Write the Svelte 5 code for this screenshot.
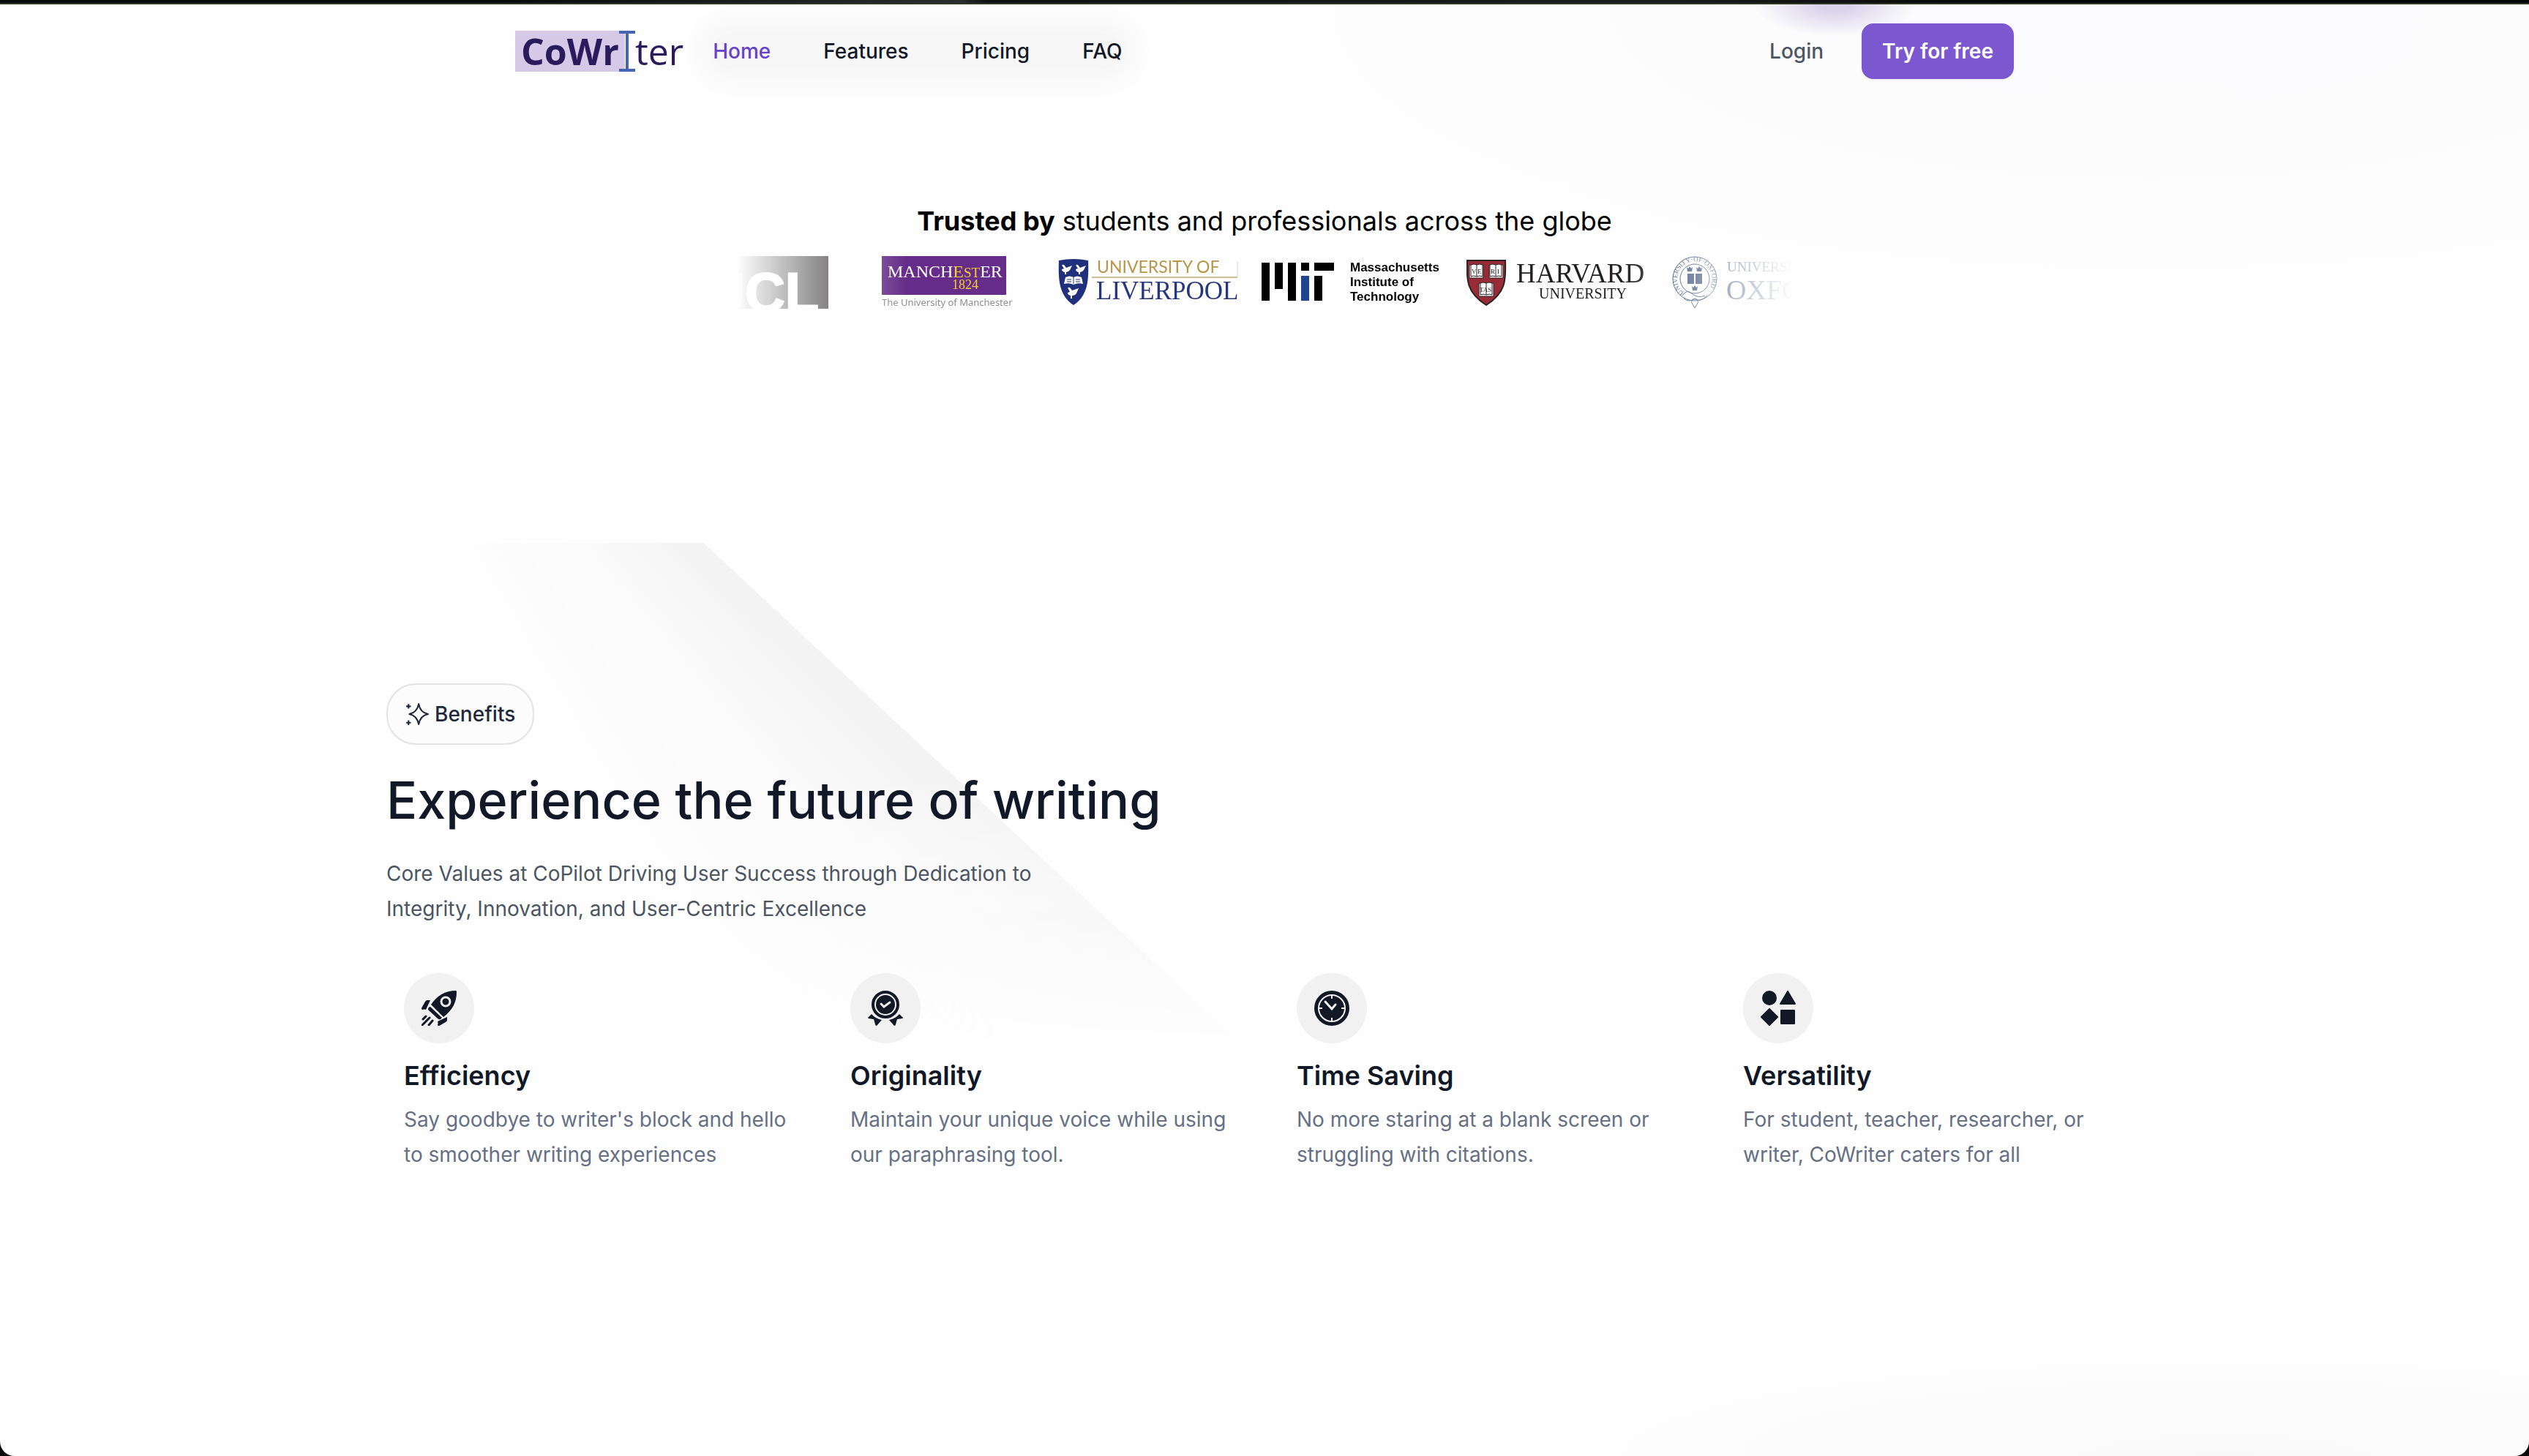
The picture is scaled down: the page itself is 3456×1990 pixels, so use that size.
<!-- src/App.svelte -->
<script lang="ts">
    type NavLink = { label: string; href: string; active?: boolean };
    type Benefit = { icon: string; title: string; text: string };

    const links: NavLink[] = [
        { label: 'Home', href: '#home', active: true },
        { label: 'Features', href: '#features' },
        { label: 'Pricing', href: '#pricing' },
        { label: 'FAQ', href: '#faq' },
    ];

    const benefits: Benefit[] = [
        {
            icon: 'rocket',
            title: 'Efficiency',
            text: "Say goodbye to writer's block and hello to smoother writing experiences",
        },
        {
            icon: 'medal',
            title: 'Originality',
            text: 'Maintain your unique voice while using our paraphrasing tool.',
        },
        {
            icon: 'clock',
            title: 'Time Saving',
            text: 'No more staring at a blank screen or struggling with citations.',
        },
        {
            icon: 'shapes',
            title: 'Versatility',
            text: 'For student, teacher, researcher, or writer, CoWriter caters for all',
        },
    ];
</script>

<div class="page">
    <header class="header">
        <div class="bar">
            <a class="logo" href="#home" aria-label="CoWriter">
                <span class="logo-mark">CoWr</span>
                <svg class="logo-cursor" viewBox="0 0 22 56" aria-hidden="true">
                    <path d="M0 2h22M0 54h22M11 2v52" fill="none" stroke="#4466b3" stroke-width="4" />
                </svg>
                <span class="logo-rest">ter</span>
            </a>
            <nav class="nav">
                {#each links as link}
                    <a href={link.href} class:active={link.active}>{link.label}</a>
                {/each}
            </nav>
            <div class="account">
                <a class="login" href="#login">Login</a>
                <button class="cta" type="button">Try for free</button>
            </div>
        </div>
    </header>

    <section class="trusted">
        <p class="trusted-title"><strong>Trusted by</strong> students and professionals across the globe</p>
        <div class="marquee">
            <div class="track">
                <!-- UCL -->
                <svg class="uni" viewBox="0 0 248 72" role="img" aria-label="UCL">
                    <rect width="248" height="72" fill="#1c191a" />
                    <text class="sans" x="79" y="76" font-size="76" fill="#fff" stroke="#fff" stroke-width="2">UCL</text>
                </svg>

                <!-- Manchester -->
                <svg class="uni" viewBox="0 0 248 72" role="img" aria-label="The University of Manchester">
                    <rect x="41" width="170" height="53" fill="#652d89" />
                    <text class="serif" x="49" y="29" font-size="24" fill="#fff"
                        >MANCH<tspan fill="#f5cf2e">E</tspan><tspan fill="#f5cf2e" font-size="19">ST</tspan>ER</text
                    >
                    <text class="serif" x="137" y="45" font-size="18" fill="#f5cf2e">1824</text>
                    <text class="caption" x="41" y="68" font-size="13" fill="#8d8d8d">The University of Manchester</text>
                </svg>

                <!-- Liverpool -->
                <svg class="uni" viewBox="0 0 248 72" role="img" aria-label="University of Liverpool">
                    <path d="M3 6q20-4 40 0c1 26 0 48-20 61C3 54 2 32 3 6z" fill="#20307c" />
                    <g fill="#fff">
                        <path
                            d="M8 14q-2-3 2-2l3 4 8-3-3 6q-2 3-5 3v3h-2v-3q-4-1-4-4l3-1zM27 14q-2-3 2-2l3 4 8-3-3 6q-2 3-5 3v3h-2v-3q-4-1-4-4l3-1zM16 45q-2-3 2-2l3 4 9-3-3 7q-2 3-6 3v4h-2v-4q-4-1-4-4l3-1z"
                        />
                        <path d="M12 29q6-3 11 0 5-3 11 0l2 9q-7-2-13 1-6-3-13-1z" />
                    </g>
                    <path d="M23 29v9M14 32h6M26 32h6M14 35h6M26 35h6" stroke="#20307c" />
                    <text class="lato" x="55" y="23" font-size="23" fill="#b89548">UNIVERSITY OF</text>
                    <path d="M48 29h199" stroke="#cdbd95" stroke-width="2" />
                    <path d="M247 7v21" stroke="#d5d4e4" />
                    <text class="serif" x="54" y="59" font-size="35" fill="#27377f">LIVERPOOL</text>
                </svg>

                <!-- MIT -->
                <svg class="uni" viewBox="0 0 248 72" role="img" aria-label="Massachusetts Institute of Technology">
                    <path d="M0 9h11v52H0zM18 9h11v36H18zM36 9h11v52H36zM54 9h11v11H54zM72 9h27v11H72zM72 27h11v34H72z" />
                    <path d="M54 27h11v34H54z" fill="#1f4591" />
                    <g class="sans" font-size="17">
                        <text x="121" y="21">Massachusetts</text>
                        <text x="121" y="41">Institute of</text>
                        <text x="121" y="61">Technology</text>
                    </g>
                </svg>

                <!-- Harvard -->
                <svg class="uni" viewBox="0 0 248 72" role="img" aria-label="Harvard University">
                    <path d="M1 6h52c1 27 1 44-26 61C0 50 0 33 1 6z" fill="#982b35" stroke="#2b2223" stroke-width="2" />
                    <g fill="#fff" stroke="#2b2223">
                        <path d="M4 12h19v18H4zM31 12h19v18H31zM17 37h20v18H17z" />
                        <path d="M6 12v16q4-2 8 0 4-2 8 0V12q-4-2-8 0-4-2-8 0zM32 12v16q4-2 8 0 4-2 8 0V12q-4-2-8 0-4-2-8 0zM19 37v16q4-2 8 0 4-2 8 0V37q-4-2-8 0-4-2-8 0z" />
                        <path d="M14 12v16M40 12v16M27 37v16" />
                    </g>
                    <g class="serif" font-size="9" fill="#2b2223">
                        <text x="7" y="24">V</text>
                        <text x="15" y="24">E</text>
                        <text x="33" y="24">R</text>
                        <text x="42" y="24">I</text>
                        <text x="18" y="49">TAS</text>
                    </g>
                    <g class="serif" fill="#231f20">
                        <text x="68" y="36" font-size="37">HARVARD</text>
                        <text x="99" y="58" font-size="20">UNIVERSITY</text>
                    </g>
                </svg>

                <!-- Oxford -->
                <svg class="uni" viewBox="0 0 248 72" role="img" aria-label="University of Oxford">
                    <g fill="none" stroke="#1c3565">
                        <circle cx="32" cy="31" r="30" />
                        <circle cx="32" cy="31" r="20" />
                        <path d="M15 54q6-10 14-2 8 6 17 2M17 58q8 6 15 0 7 6 17-4M29 59q-3 4 0 7l3 5 3-5q3-3 0-7z" />
                    </g>
                    <path id="seal-ring" d="M17 50A24 24 0 1 1 49 48" fill="none" />
                    <text class="serif" font-size="9" fill="#1c3565">
                        <textPath href="#seal-ring">UNIVERSITY·OF·OXFORD</textPath>
                    </text>
                    <g fill="#1c3565">
                        <path d="M22 24h9v14h-9zM33 24h9v14h-9z" />
                        <path d="M21 15l2 2 2-3 2 3 2-2-1 6h-6zM34 15l2 2 2-3 2 3 2-2-1 6h-6zM28 41l2 2 2-3 2 3 2-2-1 6h-6z" />
                    </g>
                    <g class="serif" fill="#1c3565">
                        <text x="76" y="21" font-size="19">UNIVERSITY OF</text>
                        <text x="75" y="59" font-size="38">OXFORD</text>
                    </g>
                </svg>
            </div>
        </div>
    </section>

    <section class="benefits">
        <div class="beam" aria-hidden="true"></div>
        <div class="pill">
            <svg viewBox="0 0 30 30" fill="none" stroke="#1e293b" stroke-width="2" stroke-linejoin="round" aria-hidden="true">
                <path d="M17 2q2 11 12 13-10 2-12 13-2-11-12-13 10-2 12-13z" />
                <path d="M4 2v6M1 5h6M4 23v6M1 26h6" />
            </svg>
            <span>Benefits</span>
        </div>
        <h1>Experience the future of writing</h1>
        <p class="lead">Core Values at CoPilot Driving User Success through Dedication to Integrity, Innovation, and User-Centric Excellence</p>

        <div class="cards">
            {#each benefits as benefit}
                <article class="card">
                    <div class="badge">
                        <svg viewBox="0 0 48 48" fill="#121826" aria-hidden="true">
                            {#if benefit.icon === 'rocket'}
                                <path d="M47 0q1 0 1 2c0 13-5 24-18 34L13 19C21 7 32 0 47 0z" />
                                <circle cx="33" cy="15" r="6" stroke="#f1f1f1" stroke-width="3" />
                                <path d="M10 23q1-1 2-1l16 15-2 2q-2 1-4-1L10 27q-2-2 0-4z" />
                                <path d="M12 13 6 26q-2-1-5 0-2-1 0-4l4-7q1-2 3-2zM35 36 22 42q1 2 0 5 1 2 4 0l7-4q2-1 2-3z" />
                                <path
                                    d="M6 35l-4 4M11 37 1 47M15 41l-5 6"
                                    fill="none"
                                    stroke="#121826"
                                    stroke-width="3"
                                    stroke-linecap="round"
                                />
                            {:else if benefit.icon === 'medal'}
                                <circle cx="24" cy="19" r="17" fill="none" stroke="#121826" stroke-width="4" />
                                <circle cx="24" cy="19" r="13" />
                                <path d="M18 18l4 4 8-6" fill="none" stroke="#f1f1f1" stroke-width="3" stroke-linecap="round" />
                                <path d="M5 32q5 6 14 8l-7 8q-2 0-2-2l-2-7-7-1q-2-1 0-2zM43 32q-5 6-14 8l7 8q2 0 2-2l2-7 7-1q2-1 0-2z" />
                            {:else if benefit.icon === 'clock'}
                                <circle cx="24" cy="24" r="24" />
                                <g fill="none" stroke="#f1f1f1" stroke-width="2">
                                    <circle cx="24" cy="24" r="18" />
                                    <path d="M24 6v5M24 37v5M6 24h5M37 24h5" />
                                    <path d="M15 15l9 10 5-6" stroke-width="3" stroke-linecap="round" />
                                </g>
                            {:else}
                                <circle cx="12" cy="10" r="10" />
                                <path
                                    d="M37 1l10 17H27zM12 25l11 11-11 11L1 36zM28 27h18v18H28z"
                                    stroke="#121826"
                                    stroke-width="2"
                                    stroke-linejoin="round"
                                />
                            {/if}
                        </svg>
                    </div>
                    <h2>{benefit.title}</h2>
                    <p>{benefit.text}</p>
                </article>
            {/each}
        </div>
    </section>
</div>

<style>
    :global(html) {
        background: #000;
    }

    :global(body) {
        margin: 0;
        background: linear-gradient(90deg, #0a0a0a 0, #0a0a0a 20%, #2c2c2c 38%, #101010 39%, #1c1c1c 65%, #050505 80%);
    }

    .page {
        box-sizing: border-box;
        position: relative;
        display: flow-root;
        min-height: calc(100vh - 4px);
        margin-top: 4px;
        overflow: hidden;
        border-top: 2px solid #2f3524;
        border-radius: 0 0 20px 20px;
        background:
            radial-gradient(ellipse 900px 140px at 88% 100%, #f9f9fa, transparent),
            radial-gradient(ellipse 1300px 420px at 85% 0, #fbfbfd, transparent),
            #fefefe;
        font-family: Inter, sans-serif;
        font-size: 28px;
        line-height: 48px;
    }

    .header {
        padding: 26px 0;
        background: radial-gradient(ellipse 110px 44px at 2508px 0, #d9d3ea 20%, transparent);
    }

    .bar {
        display: flex;
        align-items: center;
        max-width: 2048px;
        margin: 0 auto;
    }

    .logo {
        display: flex;
        align-items: center;
        margin-right: 40px;
        color: #2a1b5c;
        font-family: 'Open Sans', 'Noto Sans', sans-serif;
        font-size: 50px;
        line-height: 56px;
        text-decoration: none;
    }

    .logo-mark {
        padding: 0 8px;
        background: #d6c9e8;
        font-weight: 700;
    }

    .logo-cursor {
        width: 22px;
        height: 56px;
        margin-left: -8px;
    }

    .nav {
        display: flex;
        gap: 72px;
        border-radius: 40px;
        background: rgba(0, 0, 0, 0.03);
        box-shadow: 0 0 32px 20px rgba(0, 0, 0, 0.03);
        font-weight: 500;
    }

    .nav a {
        color: #111827;
        text-decoration: none;
    }

    .nav a.active {
        color: #6741c7;
    }

    .account {
        display: flex;
        align-items: center;
        gap: 52px;
        margin-left: auto;
        font-weight: 500;
    }

    .login {
        color: #4b5563;
        text-decoration: none;
    }

    .cta {
        padding: 14px 28px;
        border: 0;
        border-radius: 16px;
        background: #7c58d0;
        box-shadow: 0 2px 4px rgba(0, 0, 0, 0.05);
        color: #fff;
        font: inherit;
        font-weight: 600;
        cursor: pointer;
    }

    .trusted {
        max-width: 1440px;
        margin: 140px auto 0;
    }

    .trusted-title {
        margin: 0 0 20px;
        color: #000;
        font-size: 36px;
        line-height: 56px;
        text-align: center;
    }

    .marquee {
        overflow: hidden;
        mask-image: linear-gradient(to right, transparent, #000 16%, #000 84%, transparent);
    }

    .track {
        display: flex;
        gap: 32px;
        margin-left: -124px;
    }

    .uni {
        flex: none;
        width: 248px;
        height: 72px;
    }

    .serif {
        font-family: 'Liberation Serif', serif;
    }

    .sans {
        font-family: 'Liberation Sans', sans-serif;
        font-weight: 700;
    }

    .lato {
        font-family: Lato, sans-serif;
    }

    .caption {
        font-family: 'Noto Sans', sans-serif;
    }

    .benefits {
        position: relative;
        max-width: 2400px;
        margin: 512px auto 0;
    }

    /* soft light beam behind the heading */
    .beam {
        position: absolute;
        top: -192px;
        left: 0;
        width: 1200px;
        height: 700px;
        background: conic-gradient(from 132deg at -285px -670px, transparent 1deg, #f3f3f3 1deg, #fafafa 8deg, transparent 18deg);
        mask-image: linear-gradient(to bottom, #000 45%, transparent 98%);
    }

    .pill {
        position: relative;
        display: inline-flex;
        align-items: center;
        gap: 8px;
        padding: 16px 24px;
        border: 2px solid #e3e3e3;
        border-radius: 40px;
        background: #fcfcfc;
        color: #1e293b;
        font-weight: 500;
    }

    .pill svg {
        width: 32px;
        height: 32px;
    }

    h1 {
        position: relative;
        margin: 36px 0;
        color: #111827;
        font-size: 70px;
        font-weight: 500;
        line-height: 80px;
    }

    .lead {
        position: relative;
        max-width: 960px;
        margin: 0;
        color: #4b5563;
    }

    .cards {
        position: relative;
        display: grid;
        grid-template-columns: repeat(4, 1fr);
        gap: 40px;
        margin-top: 40px;
    }

    .card {
        padding: 24px 12px 24px 24px;
    }

    .badge {
        display: flex;
        align-items: center;
        justify-content: center;
        width: 96px;
        height: 96px;
        border-radius: 50%;
        background: #f1f1f1;
    }

    .badge svg {
        width: 48px;
        height: 48px;
    }

    h2 {
        margin: 16px 0 8px;
        color: #111827;
        font-size: 36px;
        font-weight: 600;
        line-height: 56px;
    }

    .card p {
        margin: 0;
        color: #667085;
    }
</style>
